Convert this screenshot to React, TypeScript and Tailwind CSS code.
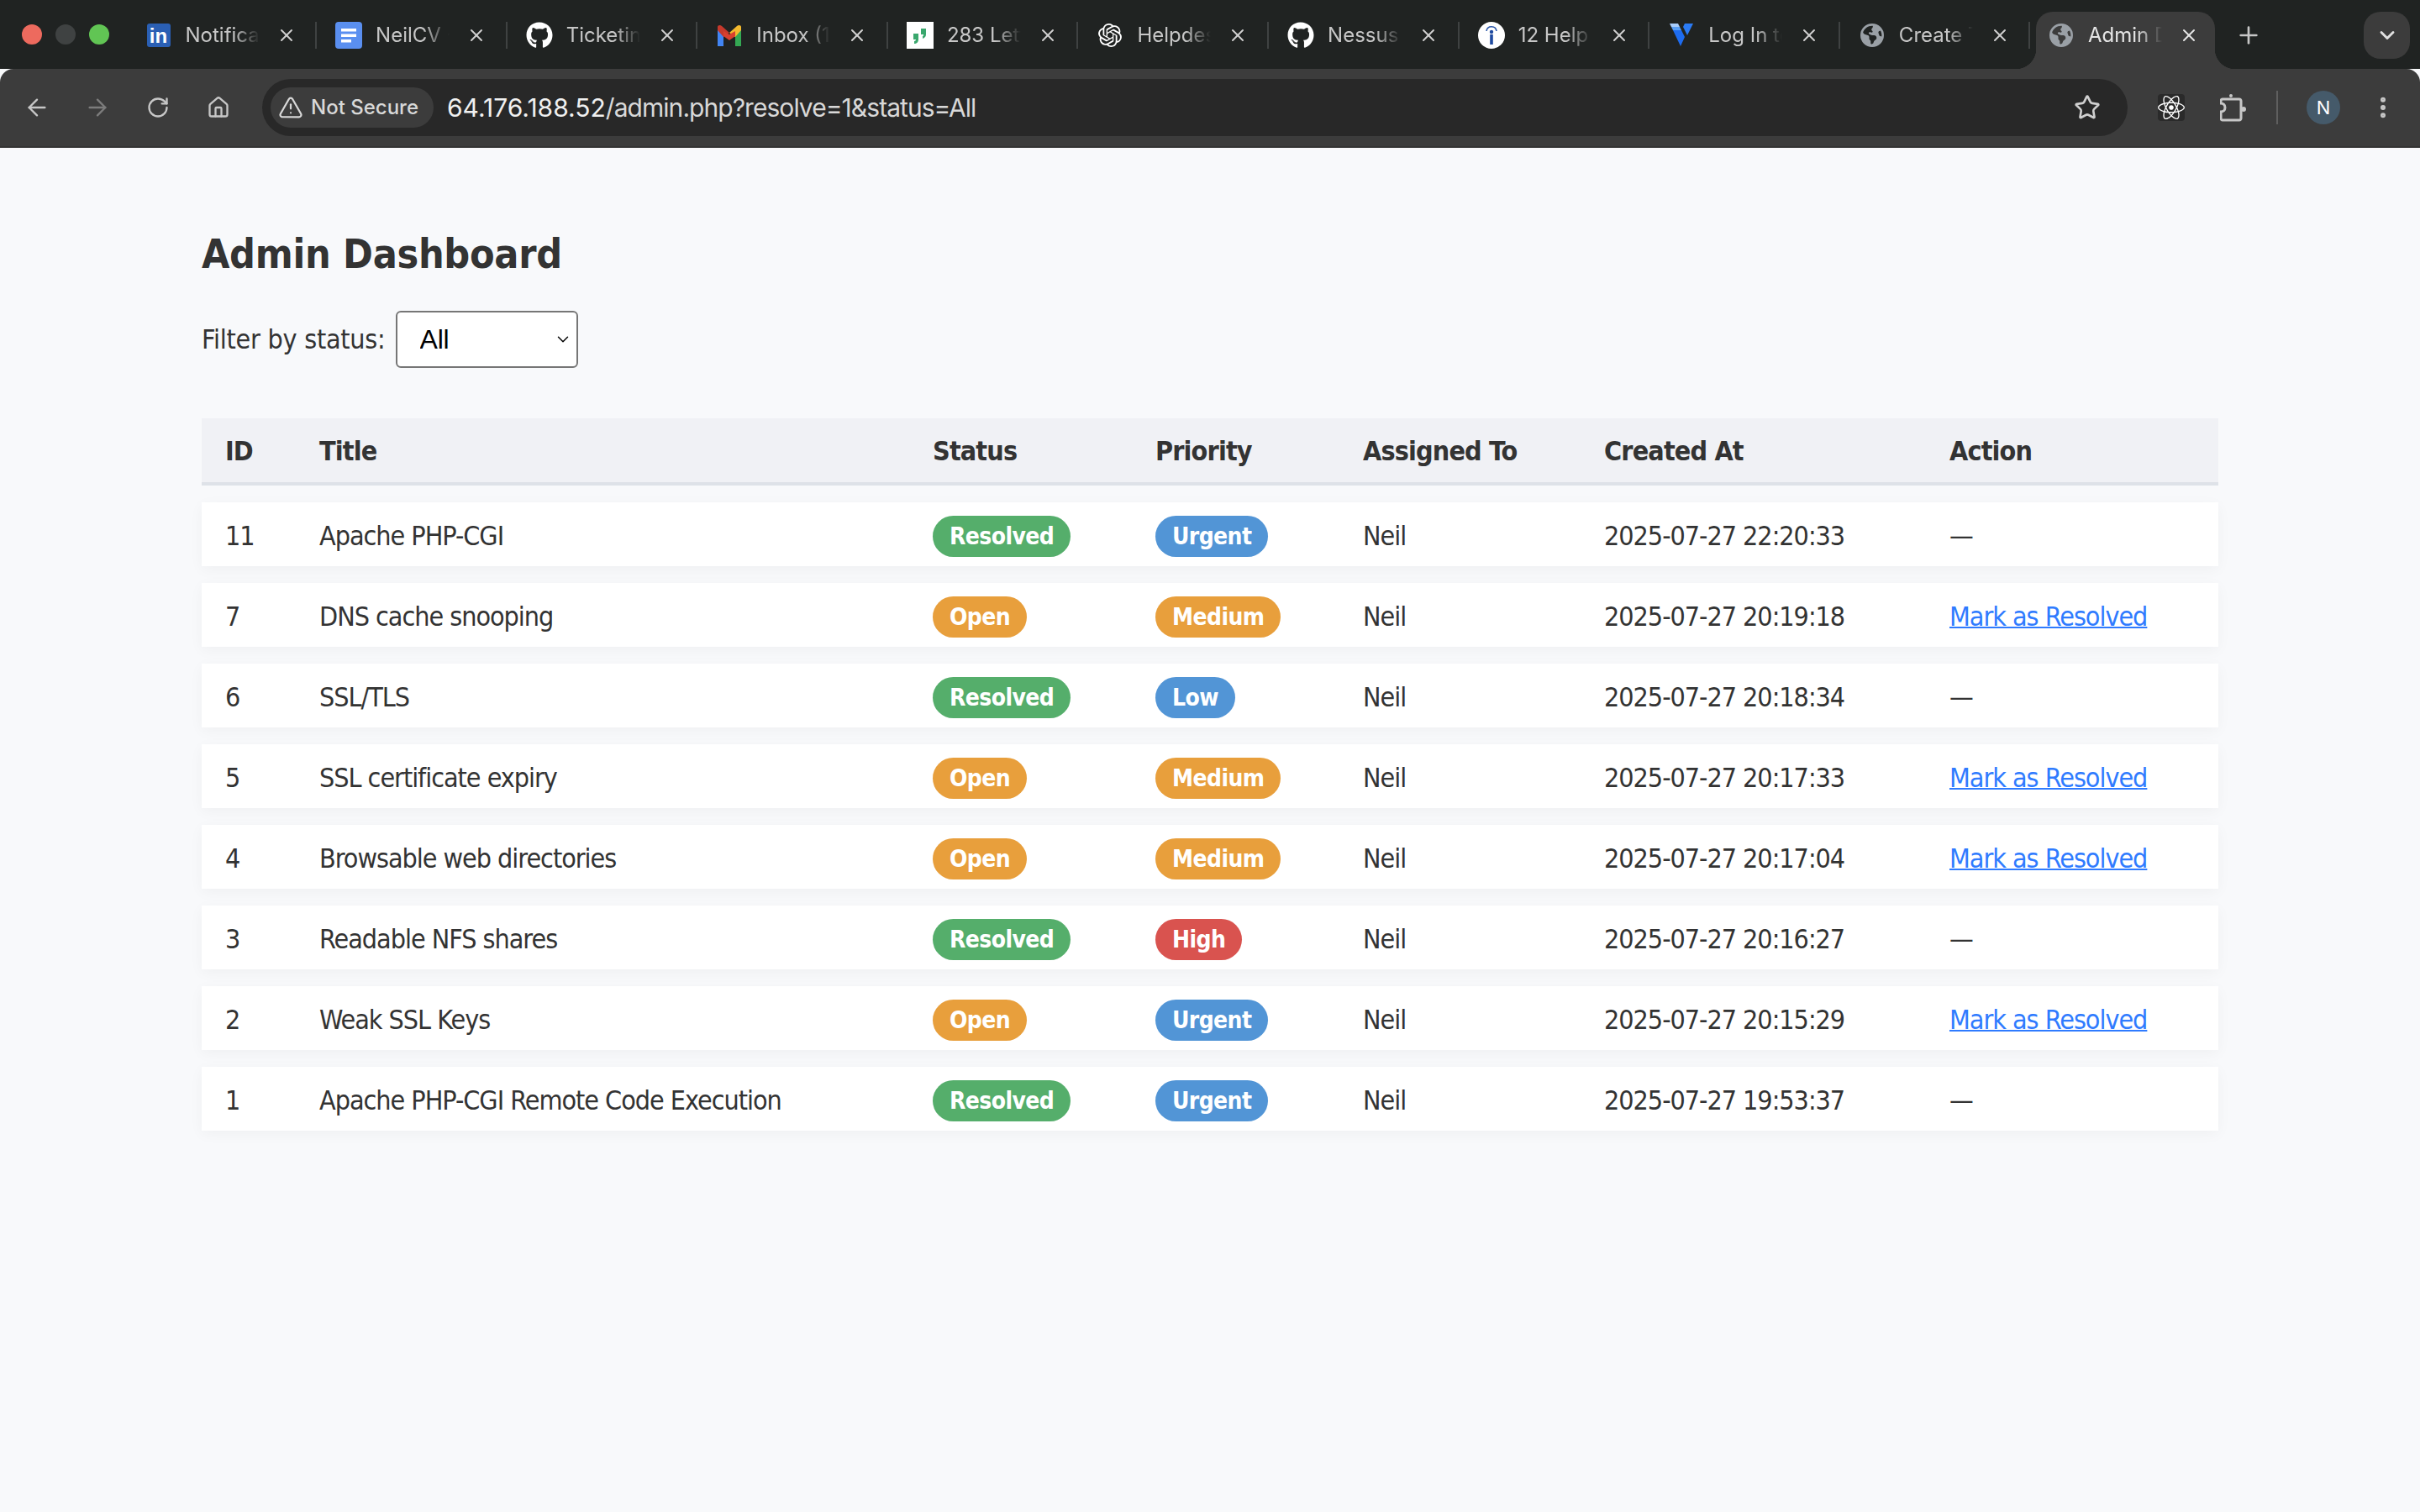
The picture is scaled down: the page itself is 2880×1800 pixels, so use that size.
import { ArrowLeft, ArrowRight, ChevronDown, EllipsisVertical, House, Plus, RotateCw, Star, TriangleAlert, X } from 'lucide-react';
import type { ReactNode } from 'react';
import { FaEarthAmericas, FaGithub, FaReact } from 'react-icons/fa6';
import { SiOpenai } from 'react-icons/si';

const LinkedinIcon = () => (
  <div className="flex h-7 w-7 items-end justify-center rounded-[3px] bg-[#2a5fb4] font-['Liberation_Sans',sans-serif] text-[24px] leading-[26px] font-bold text-white">in</div>
);

const DocsIcon = () => (
  <svg viewBox="0 0 32 32" className="h-8 w-8">
    <rect width="32" height="32" rx="4" fill="#5a8ff0" />
    <rect x="7" y="8" width="18" height="3.5" fill="#fff" />
    <rect x="7" y="14.5" width="18" height="3.5" fill="#fff" />
    <rect x="7" y="21" width="12" height="3.5" fill="#fff" />
  </svg>
);

const GmailIcon = () => (
  <svg viewBox="0 0 32 26" className="h-7 w-8">
    <path d="M2 26V6l7 6v14H2z" fill="#4285f4" />
    <path d="M30 26V6l-7 6v14h7z" fill="#34a853" />
    <path d="M2 7V3c0-2 3-3 5-1l9 8-7 5L2 7z" fill="#c5392c" />
    <path d="M16 10l9-8c2-2 5-1 5 1v4l-7 8-7-5z" fill="#f3b92e" />
    <path d="M9 8l7 4 7-4v6l-7 5-7-5V8z" fill="#d8402f" />
  </svg>
);

const LettersIcon = () => (
  <svg viewBox="0 0 32 32" className="h-8 w-8">
    <rect width="32" height="32" fill="#fff" />
    <path d="M8 14h6v7c0 3-2 5-5 5v-3c1 0 2-1 2-2H8v-7z" fill="#3aa76d" />
    <path d="M17 8h6v7c0 3-2 4-4 5v-3c1 0 1-1 1-2h-3V8z" fill="#3aa76d" />
  </svg>
);

const InfoIcon = () => (
  <svg viewBox="0 0 32 32" className="h-8 w-8">
    <circle cx="16" cy="16" r="16" fill="#fff" />
    <path d="M10 11c1-7 11-7 12 0" fill="none" stroke="#2a55a8" strokeWidth="1.5" />
    <circle cx="16" cy="12" r="2.2" fill="#1f4aa0" />
    <rect x="14.2" y="15" width="3.6" height="12" fill="#1f4aa0" />
  </svg>
);

const VultrIcon = () => (
  <svg viewBox="0 0 32 32" className="h-8 w-8">
    <path d="M2 2h10l2 4H4z" fill="#a9cdfb" />
    <path d="M4 6h10l2 4H6z" fill="#5aa0f7" />
    <path d="M6 10h10l4 8-5 11z" fill="#1e6cf0" />
    <path d="M20 2h10l-7 14-5-10z" fill="#2b7bf5" />
  </svg>
);

const GlobeIcon = () => <FaEarthAmericas className="h-7 w-7 text-[#9aa0a6]" />;

const tabs: { title: string; icon: ReactNode }[] = [
  { title: 'Notifications', icon: <LinkedinIcon /> },
  { title: 'NeilCV - Google', icon: <DocsIcon /> },
  { title: 'Ticketing', icon: <FaGithub className="h-8 w-8 text-white" /> },
  { title: 'Inbox (1)', icon: <GmailIcon /> },
  { title: '283 Letters', icon: <LettersIcon /> },
  { title: 'Helpdesk', icon: <SiOpenai className="h-7 w-7 text-white" /> },
  { title: 'Nessus', icon: <FaGithub className="h-8 w-8 text-white" /> },
  { title: '12 Help', icon: <InfoIcon /> },
  { title: 'Log In to', icon: <VultrIcon /> },
  { title: 'Create Ticket', icon: <GlobeIcon /> },
];

const tickets = [
  { id: 11, title: 'Apache PHP-CGI', status: 'Resolved', priority: 'Urgent', created: '2025-07-27 22:20:33' },
  { id: 7, title: 'DNS cache snooping', status: 'Open', priority: 'Medium', created: '2025-07-27 20:19:18' },
  { id: 6, title: 'SSL/TLS', status: 'Resolved', priority: 'Low', created: '2025-07-27 20:18:34' },
  { id: 5, title: 'SSL certificate expiry', status: 'Open', priority: 'Medium', created: '2025-07-27 20:17:33' },
  { id: 4, title: 'Browsable web directories', status: 'Open', priority: 'Medium', created: '2025-07-27 20:17:04' },
  { id: 3, title: 'Readable NFS shares', status: 'Resolved', priority: 'High', created: '2025-07-27 20:16:27' },
  { id: 2, title: 'Weak SSL Keys', status: 'Open', priority: 'Urgent', created: '2025-07-27 20:15:29' },
  { id: 1, title: 'Apache PHP-CGI Remote Code Execution', status: 'Resolved', priority: 'Urgent', created: '2025-07-27 19:53:37' },
];

const badgeColors: Record<string, string> = {
  Resolved: 'bg-[#55ae6b]',
  Open: 'bg-[#e89f3c]',
  Urgent: 'bg-[#5295d6]',
  Medium: 'bg-[#e89f3c]',
  Low: 'bg-[#5295d6]',
  High: 'bg-[#d9534f]',
};

const columns = 'grid grid-cols-[112px_730px_265px_247px_287px_411px_348px] items-center';

function Badge({ label }: { label: string }) {
  return (
    <span className={`inline-flex h-[49px] items-center rounded-full px-5 pt-px text-[28px] font-bold tracking-[-0.6px] text-white ${badgeColors[label]}`}>
      {label}
    </span>
  );
}

function Tab({ title, icon }: { title: string; icon: ReactNode }) {
  return (
    <div className="flex h-[56px] w-[226.6px] items-center pl-5">
      <div className="flex w-8 justify-center">{icon}</div>
      <div className="ml-4 w-[88px] overflow-hidden text-[24px] whitespace-nowrap text-[#c7c7c7] [mask-image:linear-gradient(to_right,black_65%,transparent)]">{title}</div>
      <X className="ml-5 h-6 w-6 text-[#d0d0d0]" strokeWidth={2} />
      <div className="ml-auto mr-[2px] h-8 w-[2px] bg-[#3f4242]" />
    </div>
  );
}

export default function App() {
  return (
    <div className="flex min-h-[1800px] flex-col bg-[#f8f9fb] font-['Inter',sans-serif]">
      {/* Tab strip */}
      <div className="flex h-[82px] items-start bg-[#202322] pt-[14px]">
        <div className="ml-[26px] mt-[15px] flex gap-4">
          <div className="h-6 w-6 rounded-full bg-[#ed6a5e]" />
          <div className="h-6 w-6 rounded-full bg-[#3f4242]" />
          <div className="h-6 w-6 rounded-full bg-[#61c554]" />
        </div>
        <div className="ml-[22.5px] flex">
          {tabs.map((tab) => (
            <Tab key={tab.title} title={tab.title} icon={tab.icon} />
          ))}
        </div>
        <div className="relative ml-[4.5px] h-[68px] w-[213px] rounded-t-[20px] bg-[#3c3c3c] pl-[14px]">
          <span className="absolute bottom-0 -left-6 h-6 w-6 bg-[radial-gradient(circle_at_0_0,#202322_24px,#3c3c3c_24.5px)]" />
          <span className="absolute -right-6 bottom-0 h-6 w-6 bg-[radial-gradient(circle_at_100%_0,#202322_24px,#3c3c3c_24.5px)]" />
          <div className="flex h-[56px] items-center">
            <div className="flex w-8 justify-center"><GlobeIcon /></div>
            <div className="ml-4 w-[88px] overflow-hidden text-[24px] whitespace-nowrap text-[#e6e6e6] [mask-image:linear-gradient(to_right,black_65%,transparent)]">Admin Dashboard</div>
            <X className="ml-5 h-6 w-6 text-[#e6e6e6]" strokeWidth={2} />
          </div>
        </div>
        <Plus className="ml-[24px] mt-[12px] h-8 w-8 text-[#c7c7c7]" strokeWidth={2} />
        <div className="ml-auto mr-3 flex h-[56px] w-[55px] items-center justify-center rounded-[20px] bg-[#3c3c3c]">
          <ChevronDown className="h-7 w-7 text-[#e0e0e0]" strokeWidth={2.5} />
        </div>
      </div>

      {/* Toolbar */}
      <div className="flex h-[94px] items-center rounded-t-[16px] border-b-2 border-[#333] bg-[#3c3c3c] pl-2 text-[#c7c7c7]">
        <button className="flex w-[72px] justify-center"><ArrowLeft className="h-8 w-8" strokeWidth={1.8} /></button>
        <button className="flex w-[72px] justify-center"><ArrowRight className="h-8 w-8 text-[#7c7c7c]" strokeWidth={1.8} /></button>
        <button className="flex w-[72px] justify-center"><RotateCw className="h-7 w-7" strokeWidth={2} /></button>
        <button className="flex w-[72px] justify-center"><House className="h-7 w-7" strokeWidth={2} /></button>
        <div className="ml-4 flex h-[68px] w-[2220px] items-center rounded-full bg-[#282828] pl-[10px]">
          <div className="flex h-12 w-[194px] items-center rounded-full bg-[#3c3c3c] pl-[9px] text-[24px] font-medium text-[#d8d8d8]">
            <TriangleAlert className="mr-[9px] h-[30px] w-[30px]" strokeWidth={1.8} />
            Not Secure
          </div>
          <div className="ml-4 text-[30px] text-[#d8d8d8]">
            <span className="text-[#f0f0f0]">64.176.188.52</span>
            <span className="tracking-[-0.95px]">/admin.php?resolve=1&amp;status=All</span>
          </div>
          <Star className="ml-auto mr-[32px] h-8 w-8 text-[#d0d0d0]" strokeWidth={2} />
        </div>
        <div className="ml-[36px] flex h-8 w-8 items-center justify-center rounded bg-[#2a2a2a]"><FaReact className="h-8 w-8 text-white" /></div>
        <svg viewBox="0 0 32 34" className="ml-[42px] h-[34px] w-8" fill="none" stroke="#c7c7c7" strokeWidth="3">
          <path d="M3 7h20c1 0 2 1 2 2v21c0 1-1 2-2 2H3c-1 0-2-1-2-2v-8c3 0 5-2 5-5s-2-5-5-5V9c0-1 1-2 2-2z" />
          <circle cx="13" cy="3" r="2" fill="#c7c7c7" stroke="none" />
          <circle cx="28" cy="19" r="3" fill="#c7c7c7" stroke="none" />
        </svg>
        <div className="ml-[35px] h-10 w-[2px] bg-[#5f5f5f]" />
        <div className="ml-[34px] flex h-10 w-10 items-center justify-center rounded-full bg-[#455a6a] text-[22px] text-white">N</div>
        <EllipsisVertical className="ml-[35px] h-8 w-8" strokeWidth={2.5} />
      </div>

      {/* Page */}
      <main className="flex-1 px-[240px] pt-[97px] font-['DejaVu_Sans',sans-serif] font-stretch-condensed text-[#333]">
        <h1 className="text-[48px] leading-[58px] font-bold tracking-[-0.3px]">Admin Dashboard</h1>
        <div className="mt-[39px] flex items-center text-[32px] tracking-[-0.25px]">
          <label>Filter by status:</label>
          <div className="relative ml-[12px] h-[68px] w-[217px]">
            <select defaultValue="All" className="h-full w-full appearance-none rounded-[6px] border-2 border-[#767676] bg-white pl-[27px] font-['Liberation_Sans',sans-serif] text-[32px] text-black">
              <option>All</option>
              <option>Open</option>
              <option>Resolved</option>
            </select>
            <ChevronDown className="pointer-events-none absolute top-[23px] right-[7px] h-[22px] w-[22px] text-black" strokeWidth={1.6} />
          </div>
        </div>

        <div className="mt-[60px] flex flex-col gap-5 text-[32px] tracking-[-1.03px]">
          <div className={`${columns} h-[80px] border-b-4 border-[#dee2e8] bg-[#f0f1f5] pt-[2px] font-bold tracking-[-0.85px]`}>
            {['ID', 'Title', 'Status', 'Priority', 'Assigned To', 'Created At', 'Action'].map((h) => (
              <div key={h} className="pl-7">{h}</div>
            ))}
          </div>
          {tickets.map((t) => (
            <div key={t.id} className={`${columns} h-[76px] bg-white pt-[3px] shadow-[0_4px_16px_rgba(0,0,0,0.04)]`}>
              <div className="pl-7">{t.id}</div>
              <div className="pl-7">{t.title}</div>
              <div className="pl-7"><Badge label={t.status} /></div>
              <div className="pl-7"><Badge label={t.priority} /></div>
              <div className="pl-7">Neil</div>
              <div className="pl-7">{t.created}</div>
              <div className="pl-7">
                {t.status === 'Open' ? <a href="#" className="text-[#2f7bff] underline decoration-2">Mark as Resolved</a> : '—'}
              </div>
            </div>
          ))}
        </div>
      </main>
    </div>
  );
}
